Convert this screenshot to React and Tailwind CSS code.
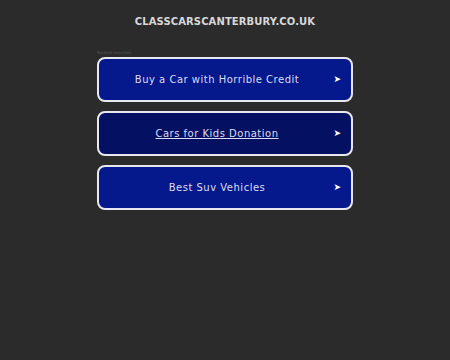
export default function App() {
  const items = [
    { t: "Buy a Car with Horrible Credit", bg: "bg-[#05188c]", u: false },
    { t: "Cars for Kids Donation", bg: "bg-[#041062]", u: true },
    { t: "Best Suv Vehicles", bg: "bg-[#05188c]", u: false },
  ];
  return (
    <div className="w-[450px] h-[360px] bg-[#2b2b2b] flex flex-col items-center" style={{ fontFamily: '"DejaVu Sans", sans-serif' }}>
      <div className="mt-[14px] h-[16px] text-[10px] font-bold text-[#d8d8d8] leading-[16px] tracking-[0.1px]">CLASSCARSCANTERBURY.CO.UK</div>
      <div className="mt-[20px] w-[256px] text-[4px] leading-[5px] text-[#555] h-[6px]">Related searches</div>
      <div className="mt-[1px] w-[256px] flex flex-col gap-[9px]">
        {items.map((it) => (
          <div key={it.t} className={`relative h-[45px] rounded-[8px] border-2 border-[#e8e8f0] ${it.bg} flex items-center justify-center pr-[16px]`}>
            <span className={`text-[10px] tracking-[0.5px] text-[#dcdcf2] ${it.u ? "underline" : ""}`}>{it.t}</span>
            <span className="absolute right-[10px] top-1/2 -translate-y-1/2 text-[9px] text-white">➤</span>
          </div>
        ))}
      </div>
    </div>
  );
}
